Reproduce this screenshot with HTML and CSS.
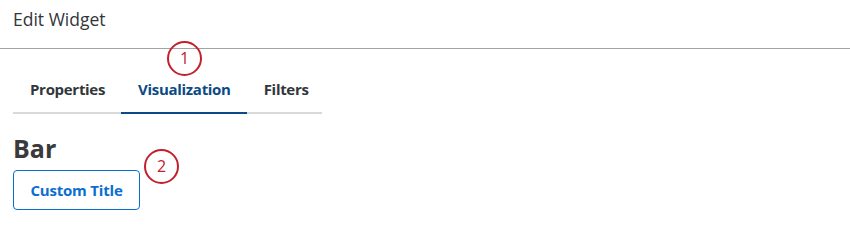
FILE: index.html
```html
<!DOCTYPE html>
<html>
	<head>
		<meta charset="UTF-8">
		<title>Edit Widget</title>
		<link rel="stylesheet" href="styles.css">
	</head>
	<body>
		<div class="dialog">
			<div class="dialog-head">Edit Widget</div>

			<div class="tabs">
				<span class="tab">Properties</span>
				<span class="tab current">Visualization
					<span class="callout callout-tab">1</span>
				</span>
				<span class="tab">Filters</span>
			</div>

			<div class="section">
				<h2 class="section-title">Bar</h2>
				<div class="section-row">
					<button class="btn">Custom Title</button>
					<span class="callout callout-btn">2</span>
				</div>
			</div>
		</div>
	</body>
</html>
```

FILE: styles.css
```css
*{
	margin: 0;
	padding: 0;
	box-sizing: border-box;
}
body{
	font-family: "Open Sans", "Noto Sans", Arial, sans-serif;
	color: #32363a;
	background: #fff;
}
.dialog-head{
	height: 49px;
	padding: 7px 0 0 13px;
	font-size: 17.5px;
	border-bottom: 1px solid #a3a3a3;
}
.tabs{
	display: flex;
	width: 309px;
	margin: 25px 0 0 13px;
	border-bottom: 2px solid #d9d9d9;
}
.tab{
	position: relative;
	padding: 3px 16px 10px 17px;
	font-size: 15px;
	font-weight: 700;
	line-height: 25px;
	letter-spacing: -0.3px;
	margin-bottom: -2px;
	border-bottom: 2px solid transparent;
}
.tab.current{
	color: #0b4a85;
	border-bottom-color: #0b4a85;
}
.section{
	padding: 19px 0 0 13px;
}
.section-title{
	font-size: 25px;
	font-weight: 700;
	line-height: 30px;
	color: #3a3a3a;
}
.section-row{
	position: relative;
	margin-top: 7px;
}
.btn{
	display: block;
	width: 127px;
	height: 40px;
	border: 1px solid #0a6ed1;
	border-radius: 4px;
	background: #fff;
	color: #0a6ed1;
	font-family: inherit;
	font-size: 15px;
	font-weight: 700;
	letter-spacing: -0.2px;
}
.callout{
	position: absolute;
	width: 35px;
	height: 35px;
	border: 2px solid #c3202e;
	border-radius: 50%;
	background: #fff;
	color: #c3202e;
	font-size: 16px;
	font-weight: 400;
	line-height: 31px;
	text-align: center;
	letter-spacing: 0;
}
.callout-tab{
	left: 46px;
	top: -33px;
	background: transparent;
}
.callout-btn{
	left: 131px;
	top: -21px;
}
```
